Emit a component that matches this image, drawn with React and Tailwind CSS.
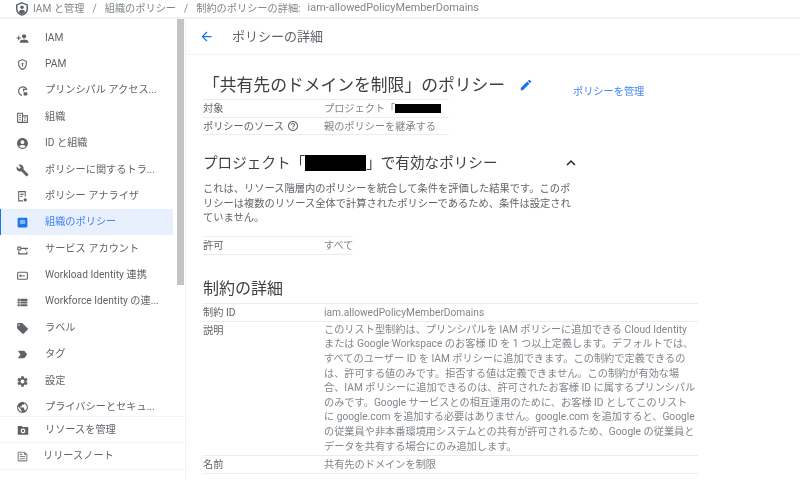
import {
  MdAccountCircle,
  MdArrowBack,
  MdBuild,
  MdCreate,
  MdExpandLess,
  MdHelpOutline,
  MdLabelImportant,
  MdLocalOffer,
  MdOutlineFeed,
  MdPersonAdd,
  MdPublic,
  MdSettings,
  MdViewList,
} from 'react-icons/md'

// icons the icon packs don't have in the console's shape
function PamIcon(props) {
  return (
    <svg viewBox="0 0 24 24" fill="none" stroke="currentColor" strokeWidth="2" {...props}>
      <path d="M12 3l7 3v5c0 4.6-3 8.4-7 10-4-1.6-7-5.4-7-10V6z" />
      <circle cx="12" cy="10.5" r="1.8" fill="currentColor" stroke="none" />
      <path d="M12 12v4" />
    </svg>
  )
}

function PrincipalIcon(props) {
  return (
    <svg viewBox="0 0 24 24" fill="none" stroke="currentColor" strokeWidth="2.2" {...props}>
      <path d="M20 10a8 8 0 1 0-9 11" />
      <path d="M20 10h-6v4" />
      <rect x="14" y="15" width="7" height="6" rx="1" fill="currentColor" stroke="none" />
    </svg>
  )
}

function OrgIcon(props) {
  return (
    <svg viewBox="0 0 24 24" fill="none" stroke="currentColor" strokeWidth="2" {...props}>
      <path d="M3 21V4h9v17M12 9h9v12H3" />
      <path d="M6 8h3M6 12h3M6 16h3M15 13h3M15 17h3" />
    </svg>
  )
}

function AnalyzerIcon(props) {
  return (
    <svg viewBox="0 0 24 24" fill="none" stroke="currentColor" strokeWidth="2" {...props}>
      <path d="M13 20H5V3h12v9" />
      <path d="M8 8h6M8 12h4" />
      <circle cx="17" cy="18" r="3" fill="currentColor" stroke="none" />
    </svg>
  )
}

function PolicyIcon(props) {
  return (
    <svg viewBox="0 0 24 24" {...props}>
      <rect x="3" y="3" width="18" height="18" rx="2" fill="#1a73e8" />
      <rect x="7" y="7" width="10" height="8" fill="#8ab4f8" />
    </svg>
  )
}

function ServiceIcon(props) {
  return (
    <svg viewBox="0 0 24 24" fill="none" stroke="currentColor" strokeWidth="2.2" {...props}>
      <circle cx="6" cy="10" r="3" />
      <path d="M9 10h13M18 10v3" />
      <path d="M5 15v5h15v-4" />
    </svg>
  )
}

function WorkloadIcon(props) {
  return (
    <svg viewBox="0 0 24 24" fill="none" stroke="currentColor" strokeWidth="2" {...props}>
      <rect x="3" y="6" width="18" height="13" rx="2" />
      <rect x="6.5" y="10.5" width="4" height="4" fill="currentColor" stroke="none" />
      <path d="M12 12.5h4" />
    </svg>
  )
}

function ResourceIcon(props) {
  return (
    <svg viewBox="0 0 24 24" {...props}>
      <path d="M3 5h7l2 2h9v13H3z" fill="currentColor" />
      <circle cx="12" cy="13.5" r="4" fill="#fff" />
      <circle cx="12" cy="13.5" r="2" fill="currentColor" />
    </svg>
  )
}

function IamIcon(props) {
  return (
    <svg viewBox="0 0 24 24" {...props}>
      <path
        d="M12 1.5l9 3.5v6.5c0 5.2-3.8 9.4-9 11-5.2-1.6-9-5.8-9-11V5z"
        fill="none"
        stroke="currentColor"
        strokeWidth="2.6"
      />
      <circle cx="12" cy="9" r="3" fill="currentColor" />
      <path d="M6.500 17c1-2.600 3-3.600 5.500-3.600s4.500 1 5.500 3.600c-1.500 2-3.500 3.200-5.500 3.800-2-.6-4-1.800-5.500-3.800z" fill="currentColor" />
    </svg>
  )
}

const NAV_ITEMS = [
  { label: 'IAM', icon: MdPersonAdd },
  { label: 'PAM', icon: PamIcon },
  { label: 'プリンシパル アクセス...', icon: PrincipalIcon },
  { label: '組織', icon: OrgIcon },
  { label: 'ID と組織', icon: MdAccountCircle },
  { label: 'ポリシーに関するトラ...', icon: MdBuild },
  { label: 'ポリシー アナライザ', icon: AnalyzerIcon },
  { label: '組織のポリシー', icon: PolicyIcon, active: true },
  { label: 'サービス アカウント', icon: ServiceIcon },
  { label: 'Workload Identity 連携', icon: WorkloadIcon },
  { label: 'Workforce Identity の連...', icon: MdViewList },
  { label: 'ラベル', icon: MdLocalOffer },
  { label: 'タグ', icon: MdLabelImportant },
  { label: '設定', icon: MdSettings },
  { label: 'プライバシーとセキュ...', icon: MdPublic },
]

const DESCRIPTION = [
  'このリスト型制約は、プリンシパルを IAM ポリシーに追加できる Cloud Identity',
  'または Google Workspace のお客様 ID を 1 つ以上定義します。デフォルトでは、',
  'すべてのユーザー ID を IAM ポリシーに追加できます。この制約で定義できるの',
  'は、許可する値のみです。拒否する値は定義できません。この制約が有効な場',
  '合、IAM ポリシーに追加できるのは、許可されたお客様 ID に属するプリンシパル',
  'のみです。Google サービスとの相互運用のために、お客様 ID としてこのリスト',
  'に google.com を追加する必要はありません。google.com を追加すると、Google',
  'の従業員や非本番環境用システムとの共有が許可されるため、Google の従業員と',
  'データを共有する場合にのみ追加します。',
]

function NavItem({ item }) {
  const Icon = item.icon
  return (
    <div
      className={
        item.active
          ? 'flex h-[26.4px] items-center border-l border-[#1a73e8] bg-[#e8f0fe] pl-[15px] text-[#4285f4]'
          : 'flex h-[26.4px] items-center pl-4 text-[#5f6368]'
      }
    >
      <Icon className="mt-[2px] size-[13px] shrink-0 text-[#5f6368]" />
      <span className="ml-[16px] truncate">{item.label}</span>
    </div>
  )
}

function Row({ label, children, className = '' }) {
  return (
    <div className={`flex border-b border-[#ececec] ${className}`}>
      <div className="w-[121px] shrink-0 text-[#5f6368]">{label}</div>
      <div className="whitespace-nowrap text-[#80868b]">{children}</div>
    </div>
  )
}

export default function App() {
  return (
    <div className="flex h-[480px] w-[800px] flex-col overflow-hidden bg-white font-['Roboto','Noto_Sans_CJK_JP',sans-serif] text-[10.2px] text-[#5f6368] blur-[0.6px]">
      <header className="flex h-[19px] shrink-0 items-center border-b-2 border-[#f1f3f4] pl-[15px] text-[#80868b]">
        <IamIcon className="size-[14px] text-[#5f6368]" />
        <span className="ml-[4px]">IAM と管理</span>
        <span className="mx-[8px]">/</span>
        <span>組織のポリシー</span>
        <span className="mx-[8px]">/</span>
        <span>制約のポリシーの詳細:</span>
        <span className="ml-[7px] text-[10.9px]">iam-allowedPolicyMemberDomains</span>
      </header>

      <div className="flex min-h-0 flex-1">
        <aside className="flex w-[186px] shrink-0 flex-col border-r border-[#f1f3f4]">
          <div className="flex h-[397px] shrink-0">
            <nav className="w-[173px] shrink-0 pt-[5px]">
              {NAV_ITEMS.map((item) => (
                <NavItem key={item.label} item={item} />
              ))}
            </nav>
            <div className="ml-[4px] w-[7px]">
              <div className="h-[266px] bg-[#c4c4c4]" />
            </div>
          </div>
          <div className="flex h-[27px] items-center border-y border-[#f1f3f4] pl-4">
            <ResourceIcon className="size-[14px] shrink-0 text-[#5f6368]" />
            <span className="ml-[15px]">リソースを管理</span>
          </div>
          <div className="flex h-[27px] items-center border-b border-[#f1f3f4] pl-4">
            <MdOutlineFeed className="size-[13px] shrink-0 text-[#80868b]" />
            <span className="ml-[14px]">リリースノート</span>
          </div>
        </aside>

        <main className="min-w-0 flex-1">
          <div className="flex h-[36px] items-center border-b border-[#f1f3f4] pl-[13px] text-[#5f6368]">
            <MdArrowBack className="size-[15px] text-[#1a73e8]" />
            <span className="ml-[18px] text-[13px]">ポリシーの詳細</span>
          </div>

          <div className="pl-[17px]">
            <div className="flex h-[44px] items-end">
              <h1 className="w-[316px] pb-[3px] font-['Noto_Sans_CJK_JP',sans-serif] text-[16.8px] leading-[24px] font-normal text-[#3c4043]">
                「共有先のドメインを制限」のポリシー
              </h1>
              <MdCreate className="mb-[7px] size-[14px] text-[#1a73e8]" />
              <span className="ml-[40px] text-[#4285f4]">ポリシーを管理</span>
            </div>

            <div className="w-[246px] border-t border-[#ececec] leading-[15.5px]">
              <Row label="対象" className="pt-px">
                プロジェクト「
                <span className="mb-[2px] inline-block h-[9px] w-[46px] bg-black align-middle" />
              </Row>
              <Row
                className="pt-px"
                label={
                  <span className="flex items-center">
                    ポリシーのソース
                    <MdHelpOutline className="ml-[3px] size-[12px]" />
                  </span>
                }
              >
                親のポリシーを継承する
              </Row>
            </div>

            <div className="mt-[17px] flex w-[377px] items-center justify-between">
              <h2 className="flex items-center text-[14.6px] leading-[22px] font-normal text-[#3c4043]">
                プロジェクト「
                <span className="inline-block h-[16px] w-[61px] bg-black" />
                」で有効なポリシー
              </h2>
              <MdExpandLess className="size-[18px] text-[#202124]" />
            </div>

            <p className="mt-[8px] w-[374px] text-[10.25px] leading-[14.6px] text-[#5f6368]">
              これは、リソース階層内のポリシーを統合して条件を評価した結果です。このポ
              <br />
              リシーは複数のリソース全体で計算されたポリシーであるため、条件は設定され
              <br />
              ていません。
            </p>

            <div className="mt-[10px] w-[150px] border-t border-[#ececec] leading-[17px]">
              <Row label="許可">すべて</Row>
            </div>

            <h2 className="mt-[22px] text-[16px] leading-[24px] font-normal text-[#3c4043]">制約の詳細</h2>

            <div className="mt-[2px] w-[495px] border-t border-[#ececec] leading-[17px]">
              <Row label="制約 ID">iam.allowedPolicyMemberDomains</Row>
              <Row label="説明">
                <div className="pt-px pb-px leading-[14.6px]">
                  {DESCRIPTION.map((line) => (
                    <div key={line}>{line}</div>
                  ))}
                </div>
              </Row>
              <Row label="名前">共有先のドメインを制限</Row>
            </div>
          </div>
        </main>
      </div>
    </div>
  )
}
